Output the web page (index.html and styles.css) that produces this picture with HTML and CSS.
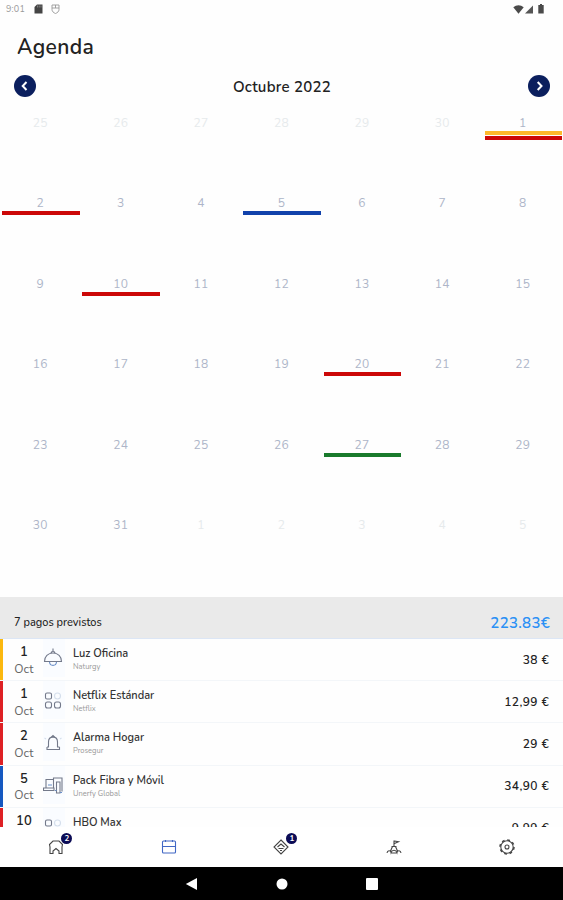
FILE: index.html
```html
<!DOCTYPE html>
<html lang="es">
<head>
    <meta charset="UTF-8">
    <meta name="viewport" content="width=device-width, initial-scale=1.0">
    <title>Agenda</title>
    <link rel="stylesheet" href="styles.css">
</head>
<body>
    <div class="app">
        <div class="status-bar">
            <div class="status-left">
                <span class="clock">9:01</span>
                <svg width="9" height="10" viewBox="0 0 9 10"><path d="M3 0.5h5.5v9h-8V3z" fill="#444"/><path d="M3.5 1.5v2M5.2 1.5v2M7 1.5v2" stroke="#aaa" stroke-width=".6"/></svg>
                <svg class="shield" width="9" height="10" viewBox="0 0 9 10"><path d="M1 1h7v4.5c0 2-1.500 3.200-3.500 4C2.500 8.700 1 7.500 1 5.500zM1 4h7M4.500 1v3" fill="none" stroke="#999" stroke-width=".9"/></svg>
            </div>
            <div class="status-right">
                <svg width="11" height="9" viewBox="0 0 11 9"><path d="M0.300 2.300C3.500-.4 7.500-.4 10.700 2.300L5.500 8.800z" fill="#4a4a4a"/></svg>
                <svg width="8" height="9" viewBox="0 0 8 9"><path d="M8 .5V8.500H0z" fill="#555"/></svg>
                <svg class="battery" width="6" height="10" viewBox="0 0 6 10"><path d="M2 0h2v1h1.700v8.500H.3V1H2z" fill="#4a4a4a"/></svg>
            </div>
        </div>

        <h1>Agenda</h1>

        <div class="month">
            <button class="arrow"><svg width="22" height="22" viewBox="0 0 22 22"><path d="M12.500 7L8.700 11l3.800 4" fill="none" stroke="#fff" stroke-width="2"/></svg></button>
            <h2>Octubre 2022</h2>
            <button class="arrow"><svg width="22" height="22" viewBox="0 0 22 22"><path d="M9.700 7l3.800 4-3.800 4" fill="none" stroke="#fff" stroke-width="2"/></svg></button>
        </div>

        <div class="calendar">
            <div class="day out">25</div>
            <div class="day out">26</div>
            <div class="day out">27</div>
            <div class="day out">28</div>
            <div class="day out">29</div>
            <div class="day out">30</div>
            <div class="day">1<i class="mark yellow"></i><i class="mark red"></i></div>

            <div class="day">2<i class="mark red"></i></div>
            <div class="day">3</div>
            <div class="day">4</div>
            <div class="day">5<i class="mark blue"></i></div>
            <div class="day">6</div>
            <div class="day">7</div>
            <div class="day">8</div>

            <div class="day">9</div>
            <div class="day">10<i class="mark red"></i></div>
            <div class="day">11</div>
            <div class="day">12</div>
            <div class="day">13</div>
            <div class="day">14</div>
            <div class="day">15</div>

            <div class="day">16</div>
            <div class="day">17</div>
            <div class="day">18</div>
            <div class="day">19</div>
            <div class="day">20<i class="mark red"></i></div>
            <div class="day">21</div>
            <div class="day">22</div>

            <div class="day">23</div>
            <div class="day">24</div>
            <div class="day">25</div>
            <div class="day">26</div>
            <div class="day">27<i class="mark green"></i></div>
            <div class="day">28</div>
            <div class="day">29</div>

            <div class="day">30</div>
            <div class="day">31</div>
            <div class="day out">1</div>
            <div class="day out">2</div>
            <div class="day out">3</div>
            <div class="day out">4</div>
            <div class="day out">5</div>
        </div>

        <div class="summary">
            <span class="count">7 pagos previstos</span>
            <span class="total">223.83€</span>
        </div>

        <div class="payments">
            <div class="payment yellow">
                <div class="date"><b>1</b><span>Oct</span></div>
                <div class="icon">
                    <svg width="20" height="20" viewBox="0 0 20 20"><path d="M10 .5v3M8 5c0-2 4-2 4 0M1.500 13.500c0-5 3.500-8.500 8.500-8.500s8.500 3.500 8.500 8.500z"/><path class="accent" d="M6.500 14c.5 4.500 6.500 4.500 7 0"/></svg>
                </div>
                <div class="name"><b>Luz Oficina</b><span>Naturgy</span></div>
                <div class="amount">38 €</div>
            </div>
            <div class="payment red">
                <div class="date"><b>1</b><span>Oct</span></div>
                <div class="icon">
                    <svg width="20" height="20" viewBox="0 0 20 20"><rect x="2.500" y="3" width="6" height="6" rx="1.500"/><rect class="pale" x="11.500" y="3" width="6" height="6" rx="3"/><rect x="2.500" y="12" width="6" height="6" rx="2"/><rect x="11.500" y="12" width="6" height="6" rx="2"/></svg>
                </div>
                <div class="name"><b>Netflix Estándar</b><span>Netflix</span></div>
                <div class="amount">12,99 €</div>
            </div>
            <div class="payment red">
                <div class="date"><b>2</b><span>Oct</span></div>
                <div class="icon">
                    <svg width="20" height="20" viewBox="0 0 20 20"><path d="M5.500 15V10c0-6.500 9-6.500 9 0v5M4 15v2.500h12.500V15M4 15h2M14 15h2.500M8.500 5l1.500-1.500L11.500 5"/><path class="pale" d="M1.500 6l1.500 1M18.500 6L17 7"/></svg>
                </div>
                <div class="name"><b>Alarma Hogar</b><span>Prosegur</span></div>
                <div class="amount">29 €</div>
            </div>
            <div class="payment blue">
                <div class="date"><b>5</b><span>Oct</span></div>
                <div class="icon">
                    <svg width="20" height="20" viewBox="0 0 20 20"><path d="M10.500 4.500H3v8.500M.5 13v2.500h10.500V13zM10.500 13V3H19v13.500M13.500 7H17v11h-3.500z"/><path class="accent" d="M5 10h4M12 15.500h1.500M17 17.500h2"/></svg>
                </div>
                <div class="name"><b>Pack Fibra y Móvil</b><span>Unerfy Global</span></div>
                <div class="amount">34,90 €</div>
            </div>
            <div class="payment red">
                <div class="date"><b>10</b><span>Oct</span></div>
                <div class="icon">
                    <svg width="20" height="20" viewBox="0 0 20 20"><rect x="2.500" y="3" width="6" height="6" rx="1.500"/><rect class="pale" x="11.500" y="3" width="6" height="6" rx="3"/><rect x="2.500" y="12" width="6" height="6" rx="2"/><rect x="11.500" y="12" width="6" height="6" rx="2"/></svg>
                </div>
                <div class="name"><b>HBO Max</b><span>HBO</span></div>
                <div class="amount">9,99 €</div>
            </div>
        </div>

        <div class="tabs">
            <div class="tab">
                <svg width="16" height="16" viewBox="0 0 16 16"><path d="M5 14.500H2V8L1.500 5.500 5 2h6l3.500 3.500L14 8v6.500h-3V12L8 9.500 5 12z"/></svg>
                <span class="badge">2</span>
            </div>
            <div class="tab active">
                <svg width="16" height="16" viewBox="0 0 16 16"><rect x="1.500" y="2" width="13" height="12" rx="1"/><path d="M1.500 7.500h13M4.500 1v2M11.500 1v2"/></svg>
            </div>
            <div class="tab">
                <svg width="16" height="16" viewBox="0 0 16 16"><path d="M8 1l7 7-7 7-7-7zM4.500 8L8 5l3.500 3M5.500 9.500h5M7 11.500h2"/></svg>
                <span class="badge">1</span>
            </div>
            <div class="tab">
                <svg width="16" height="16" viewBox="0 0 16 16"><path d="M8 7V1.500M8.500 2l4 .8L8.500 4.500M5.500 7.500h5M6.500 7.500L4.500 12M9.500 7.500l2 4.500M1 14c.5-3 3.500-3 4-.5C6 10.500 10 10.500 11 13.500c.5-2.500 3.500-2.500 4 .5M5.500 14h5"/></svg>
            </div>
            <div class="tab">
                <svg width="16" height="16" viewBox="0 0 16 16"><circle cx="8" cy="8" r="6.200"/><circle cx="8" cy="8" r="2"/><circle cx="8" cy="8" r="7" stroke-width="1.500" stroke-dasharray="2.750 2.750"/></svg>
            </div>
        </div>

        <div class="android-bar">
            <svg width="14" height="14" viewBox="0 0 14 14"><path d="M.8 7L12 1v12z"/></svg>
            <svg width="14" height="14" viewBox="0 0 14 14"><circle cx="7" cy="7" r="5.500"/></svg>
            <svg width="14" height="14" viewBox="0 0 14 14"><rect x="1" y="1" width="12" height="12" rx="1"/></svg>
        </div>
    </div>
</body>
</html>
```
FILE: styles.css
```css
* {
    box-sizing: border-box;
}

body {
    margin: 0;
    font-family: Nunito, Lato, sans-serif;
    background-color: #fefefe;
    color: #222;
}

.app {
    display: flex;
    flex-direction: column;
    width: 563px;
    height: 900px;
    overflow: hidden;
}

svg {
    display: block;
    flex: none;
}

.status-bar {
    height: 18px;
    padding: 0 19px 0 6px;
    display: flex;
    justify-content: space-between;
    align-items: center;
}

.status-left, .status-right {
    display: flex;
    align-items: center;
}

.clock {
    width: 28px;
    font-size: 9px;
    letter-spacing: 0.2px;
    color: #999;
}

.shield {
    margin-left: 8px;
}

.status-right {
    gap: 1px;
}

.battery {
    margin-left: 4px;
}

h1 {
    margin: 15px 0 0 17px;
    height: 29px;
    line-height: 29px;
    font-size: 21px;
    font-weight: 600;
    letter-spacing: 0.4px;
}

.month {
    height: 48px;
    padding: 0 13px 0 14px;
    display: flex;
    justify-content: space-between;
    align-items: center;
}

.month h2 {
    margin: 1px 0 0;
    font-size: 15px;
    font-weight: 600;
    letter-spacing: 0.25px;
}

.arrow {
    width: 22px;
    height: 22px;
    padding: 0;
    border: none;
    border-radius: 50%;
    background-color: #0b1f5e;
}

.calendar {
    margin-top: 4px;
    height: 483px;
    display: grid;
    grid-template-columns: repeat(7, 1fr);
    grid-template-rows: repeat(6, 80.4px);
}

.day {
    padding-top: 1px;
    text-align: center;
    font-size: 12px;
    line-height: 16px;
    letter-spacing: 0.3px;
    color: #adb5c8;
}

.day.out {
    color: #e6eaec;
}

.mark {
    display: block;
    width: 77.5px;
    height: 4px;
    margin: 0 0 1px 2px;
}

.mark.red { background-color: #cc0808; }
.mark.yellow { background-color: #fdb92c; }
.mark.blue { background-color: #1142ab; }
.mark.green { background-color: #197a2c; }

.summary {
    height: 42px;
    padding: 10px 13px 0 14px;
    display: flex;
    justify-content: space-between;
    align-items: center;
    background-color: #eaeaea;
    border-bottom: 1px solid #dce6f5;
}

.count {
    font-size: 11px;
    font-weight: 500;
}

.total {
    font-size: 15px;
    font-weight: 600;
    letter-spacing: 0.3px;
    color: #2b90f5;
}

.payments {
    height: 188px;
    overflow: hidden;
}

.payment {
    height: 42.2px;
    padding-right: 14px;
    display: flex;
    border-bottom: 1.2px solid #f3f6f9;
}

/* colour stripe of the category */
.payment::before {
    content: "";
    width: 3px;
}

.payment.yellow::before { background-color: #fbb80f; }
.payment.red::before { background-color: #de2024; }
.payment.blue::before { background-color: #1558c0; }

.date {
    width: 42px;
    padding-top: 5px;
    display: flex;
    flex-direction: column;
    align-items: center;
    line-height: 16.5px;
    font-size: 12px;
    letter-spacing: 0.2px;
    color: #666;
}

.date b {
    font-weight: 600;
    font-size: 13px;
    color: #222;
}

.icon {
    width: 22px;
    height: 38px;
    display: flex;
    align-items: center;
    margin-left: -2px;
    background-color: #fafcff;
}

.icon svg, .tab svg {
    fill: none;
    stroke: #73798a;
    stroke-width: 1.1;
}

.icon .accent { stroke: #6b8fc8; }
.icon .pale { stroke: #d5dfec; }

.name {
    flex: 1;
    margin-left: 5px;
    padding: 8px 0 0 3px;
    display: flex;
    flex-direction: column;
}

.name b {
    font-size: 11px;
    line-height: 14px;
    font-weight: 600;
    color: #333;
}

.name span {
    font-size: 7.5px;
    line-height: 11px;
    color: #999;
}

.amount {
    align-self: center;
    font-size: 12px;
    font-weight: 600;
    letter-spacing: 0.4px;
}

.tabs {
    height: 40px;
    display: grid;
    grid-template-columns: repeat(5, 1fr);
    background-color: #fff;
}

.tab {
    position: relative;
    display: flex;
    justify-content: center;
    align-items: center;
}

.tab svg { stroke: #444; }
.tab.active svg { stroke: #4167c4; }

.badge {
    position: absolute;
    top: 6px;
    left: calc(50% + 5px);
    width: 11px;
    height: 11px;
    border-radius: 50%;
    background-color: #0b0b55;
    color: #fff;
    font-size: 8px;
    font-weight: bold;
    line-height: 11px;
    text-align: center;
}

.android-bar {
    height: 33px;
    display: flex;
    justify-content: center;
    align-items: center;
    gap: 76px;
    background-color: #000;
}

.android-bar svg { fill: #fff; }
```
